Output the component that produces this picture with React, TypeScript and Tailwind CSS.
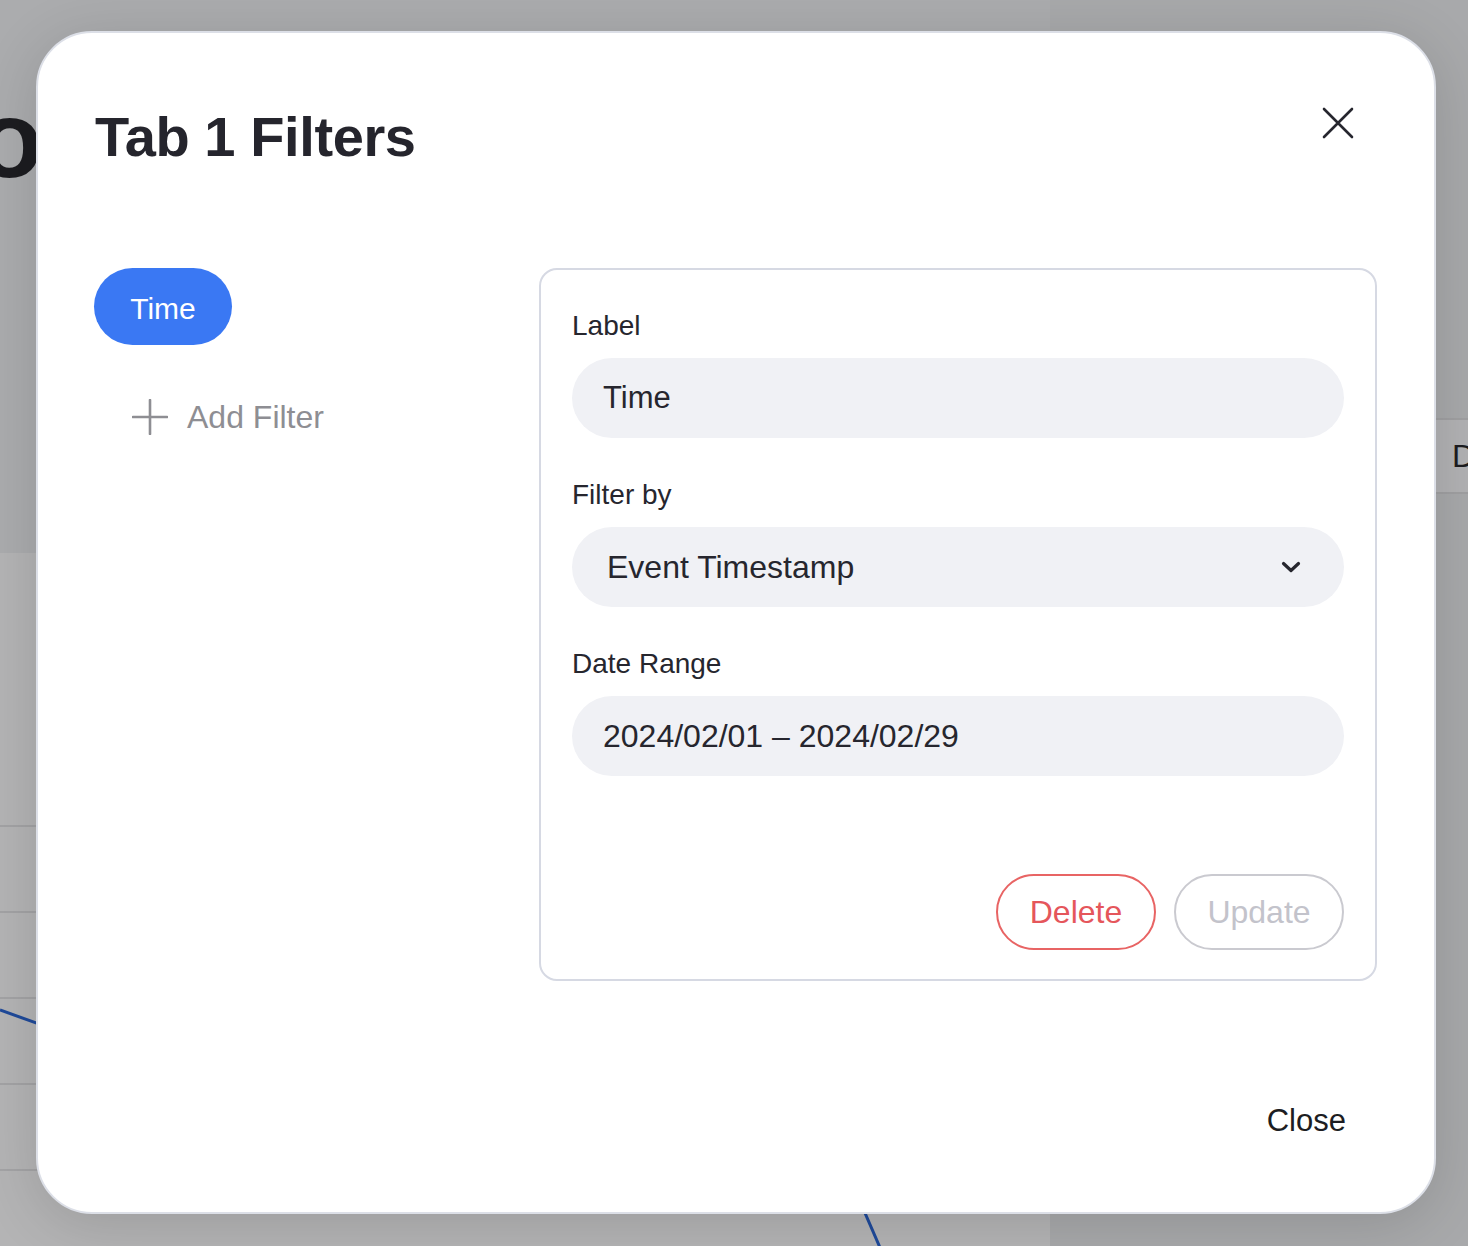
import React from "react"

function CloseIcon() {
  return (
    <svg width="32" height="32" viewBox="0 0 32 32" fill="none">
      <path d="M2 2L30 30M30 2L2 30" stroke="#26262e" strokeWidth="2.6" strokeLinecap="round" />
    </svg>
  )
}

function PlusIcon() {
  return (
    <svg width="36" height="36" viewBox="0 0 36 36" fill="none">
      <path d="M18 1V35M1 18H35" stroke="#8e8e93" strokeWidth="2.6" strokeLinecap="round" />
    </svg>
  )
}

function ChevronDown() {
  return (
    <svg width="20" height="14" viewBox="0 0 20 14" fill="none">
      <path d="M2.5 3.5L10 10.5L17.5 3.5" stroke="#26262e" strokeWidth="3.2" strokeLinecap="round" strokeLinejoin="round" />
    </svg>
  )
}

function Field({ label, children }: { label: string; children: React.ReactNode }) {
  return (
    <div className="flex flex-col">
      <div className="mb-[15px] h-[34px] text-[28px] leading-[34px] text-[#26262e]">{label}</div>
      {children}
    </div>
  )
}

export default function App() {
  return (
    <div className="relative h-[1246px] w-[1468px] overflow-hidden bg-[#adaeb0] font-['Liberation_Sans',Arial,sans-serif]">
      {/* dimmed page behind the dialog */}
      <div className="flex h-full">
        <div className="flex w-[1050px] shrink-0 flex-col">
          <div className="h-[553px] shrink-0 bg-[#abacae] pt-[84px]">
            <div className="-ml-[24px] text-[110px] font-bold leading-none text-[#1c1c20]">o</div>
          </div>
          <div className="relative flex-1 overflow-hidden bg-[#b4b4b5] pt-[272px]">
            {[0, 1, 2, 3, 4].map((i) => (
              <div key={i} className="h-[86px] border-t-2 border-[#a3a3a5]" />
            ))}
            <svg className="absolute left-0 top-0" width="1050" height="693" viewBox="0 0 1050 693" fill="none">
              <polyline points="0,457 400,600 855,637 888,713" stroke="#1f4a9a" strokeWidth="3" />
            </svg>
          </div>
        </div>
        <div className="min-w-0 flex-1 bg-[#a8a9ab] pt-[418px]">
          <div className="flex h-[76px] items-center border-y-2 border-[#a0a0a2] bg-[#b2b2b4] pl-[402px] text-[32px] text-[#1c1c20]">
            D
          </div>
        </div>
      </div>

      {/* dialog */}
      <div className="absolute left-[36px] top-[31px] flex h-[1183px] w-[1400px] flex-col rounded-[56px] border-2 border-[#dcdfe7] bg-white pl-[57px] pr-[57px] pt-[76px] shadow-[0_10px_60px_rgba(0,0,0,0.14)]">
        <div className="flex items-start justify-between">
          <h2 className="text-[56px] font-bold leading-[56px] tracking-[-0.4px] text-[#25252d]">Tab 1 Filters</h2>
          <button className="-mt-[2px] mr-[23px]">
            <CloseIcon />
          </button>
        </div>

        <div className="mt-[103px] flex">
          {/* filter list */}
          <div className="flex w-[444px] flex-col items-start">
            <div className="-ml-px flex h-[77px] w-[138px] items-center justify-center rounded-full bg-[#3a78f3] pt-[3px] text-[30px] text-white">
              Time
            </div>
            <div className="ml-[37px] mt-[54px] flex items-center gap-[19px]">
              <PlusIcon />
              <span className="text-[32px] leading-none text-[#8e8e93]">Add Filter</span>
            </div>
          </div>

          {/* filter editor */}
          <div className="flex h-[713px] flex-1 flex-col rounded-[18px] border-2 border-[#d6d9e3] px-[31px] pt-[39px]">
            <div className="flex flex-col gap-[40px]">
              <Field label="Label">
                <div className="flex h-[80px] items-center rounded-full bg-[#f0f1f5] pl-[31px] text-[31px] text-[#26262e]">
                  Time
                </div>
              </Field>
              <Field label="Filter by">
                <div className="flex h-[80px] items-center justify-between rounded-full bg-[#f0f1f5] pl-[35px] pr-[43px] text-[32px] text-[#26262e]">
                  <span>Event Timestamp</span>
                  <ChevronDown />
                </div>
              </Field>
              <Field label="Date Range">
                <div className="flex h-[80px] items-center rounded-full bg-[#f0f1f5] pl-[31px] text-[32px] text-[#26262e]">
                  2024/02/01 – 2024/02/29
                </div>
              </Field>
            </div>
            <div className="mt-[98px] flex justify-end gap-[18px]">
              <button className="h-[76px] w-[160px] rounded-full border-2 border-[#e86464] text-[32px] text-[#e5565b]">
                Delete
              </button>
              <button className="h-[76px] w-[170px] rounded-full border-2 border-[#cacad0] text-[32px] text-[#c3c3cb]">
                Update
              </button>
            </div>
          </div>
        </div>

        <div className="mt-auto flex justify-end pb-[68px] pr-[31px]">
          <button className="text-[31px] text-[#1d1d22]">Close</button>
        </div>
      </div>
    </div>
  )
}
